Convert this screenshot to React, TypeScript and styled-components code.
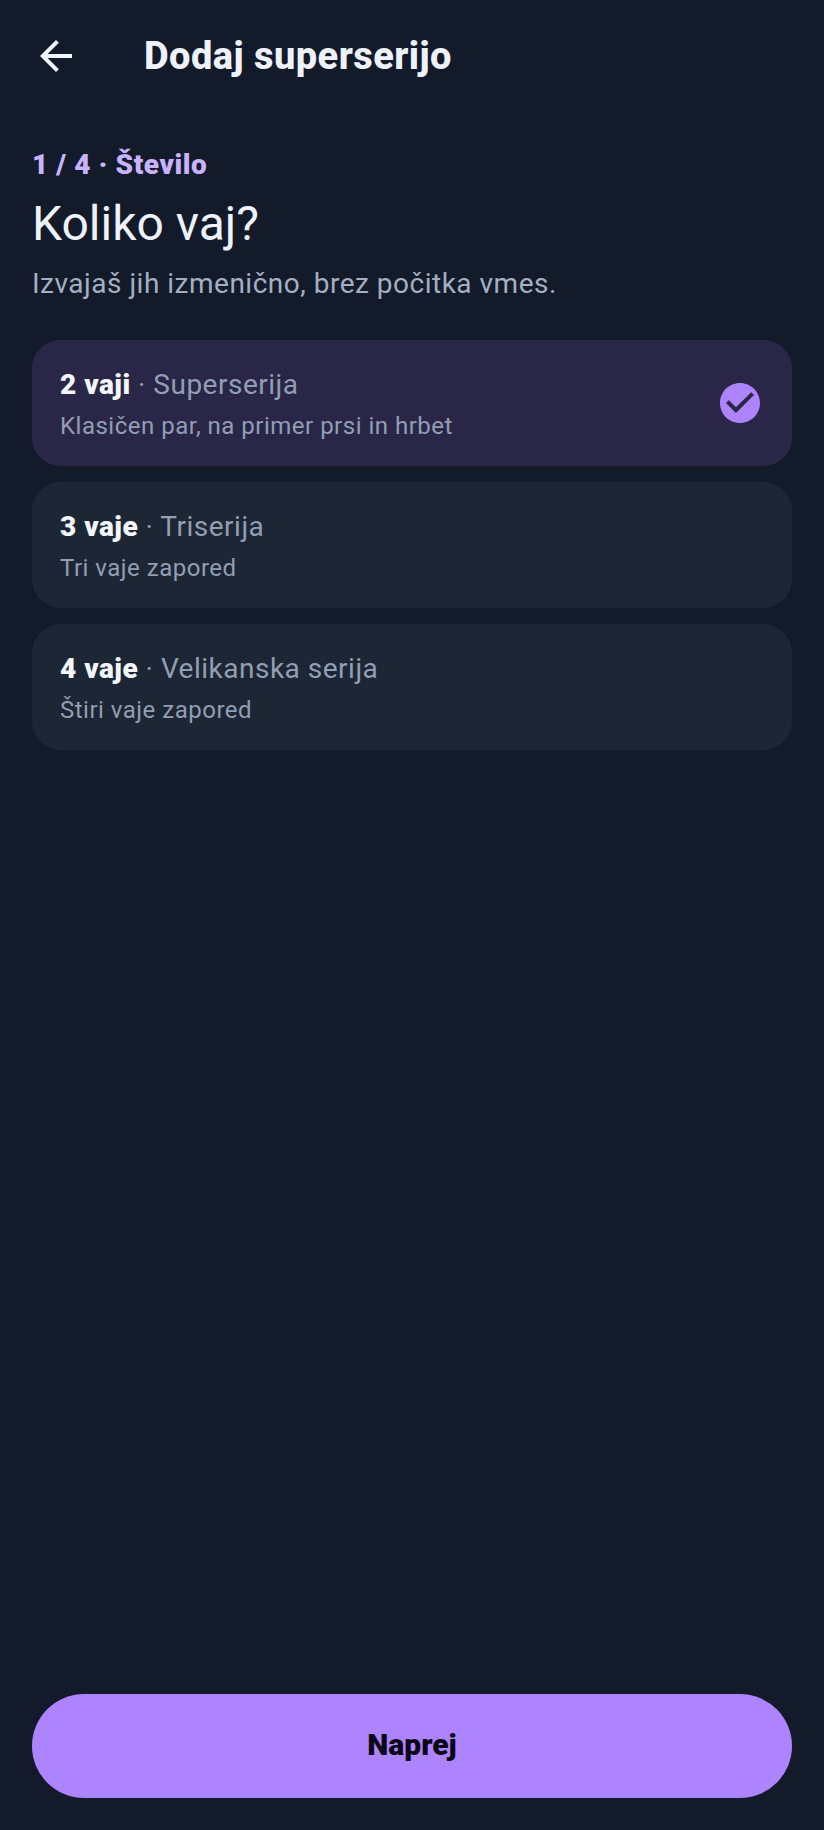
import React, { useState } from "react";
import styled, { createGlobalStyle } from "styled-components";

const GlobalStyle = createGlobalStyle`
  html, body {
    margin: 0;
    padding: 0;
    background: #131a29;
    font-family: Roboto, "Noto Sans", sans-serif;
  }
`;

const Screen = styled.div`
  width: 824px;
  height: 1830px;
  background: #131a29;
  display: flex;
  flex-direction: column;
  overflow: hidden;
`;

const TopBar = styled.header`
  height: 112px;
  display: flex;
  align-items: center;
  padding: 0 32px;
`;

const BackButton = styled.button`
  width: 48px;
  height: 48px;
  padding: 0;
  border: none;
  background: none;
  color: #f1f5fe;
  cursor: pointer;
  display: flex;
`;

const BarTitle = styled.h1`
  margin: 0 0 0 64px;
  font-size: 38px;
  font-weight: 800;
  line-height: 48px;
  letter-spacing: 0.45px;
  color: #eef2fd;
`;

const Body = styled.main`
  flex: 1;
  padding: 35px 32px 0;
  display: flex;
  flex-direction: column;
`;

const StepLabel = styled.div`
  font-size: 28px;
  font-weight: 900;
  line-height: 36px;
  letter-spacing: 0.55px;
  color: #c9b2ff;
`;

const Question = styled.h2`
  margin: 9px 0 0;
  font-size: 48px;
  font-weight: 400;
  line-height: 64px;
  color: #eef2fd;
`;

const Hint = styled.p`
  margin: 8px 0 0;
  font-size: 28px;
  line-height: 40px;
  letter-spacing: 0.5px;
  color: #a3afc2;
`;

const OptionList = styled.div`
  margin-top: 36px;
  display: flex;
  flex-direction: column;
  gap: 16px;
`;

const OptionCard = styled.div<{ $selected: boolean }>`
  height: 126px;
  box-sizing: border-box;
  padding: 0 28px;
  border-radius: 28px;
  background: ${(p) => (p.$selected ? "#2a2647" : "#1c2635")};
  display: flex;
  align-items: center;
  justify-content: space-between;
  cursor: pointer;
`;

const OptionText = styled.div`
  padding-top: 1px;
  display: flex;
  flex-direction: column;
  gap: 5px;
`;

const OptionTitle = styled.div`
  font-size: 28px;
  line-height: 40px;
  letter-spacing: 0.5px;
  color: #929eb3;
`;

const OptionCount = styled.span`
  font-weight: 900;
  color: #f4f6fe;
`;

const OptionNote = styled.div`
  font-size: 24px;
  line-height: 32px;
  letter-spacing: 0.5px;
  color: #929eb3;
`;

const Footer = styled.footer`
  padding: 0 32px 32px;
`;

const NextButton = styled.button`
  width: 100%;
  height: 104px;
  border: none;
  border-radius: 52px;
  background: #ad83ff;
  color: #0b0616;
  font-family: inherit;
  font-size: 30px;
  font-weight: 900;
  line-height: 36px;
  padding: 0 0 2px;
  cursor: pointer;
`;

const options = [
  { id: 2, count: "2 vaji", name: "Superserija", note: "Klasičen par, na primer prsi in hrbet" },
  { id: 3, count: "3 vaje", name: "Triserija", note: "Tri vaje zapored" },
  { id: 4, count: "4 vaje", name: "Velikanska serija", note: "Štiri vaje zapored" },
];

const App = () => {
  const [selected, setSelected] = useState(2);

  return (
    <Screen>
      <GlobalStyle />
      <TopBar>
        <BackButton aria-label="Nazaj">
          <svg width="48" height="48" viewBox="0 0 24 24" fill="currentColor">
            <path d="M20 11H7.83l5.59-5.59L12 4l-8 8 8 8 1.41-1.41L7.83 13H20v-2z" />
          </svg>
        </BackButton>
        <BarTitle>Dodaj superserijo</BarTitle>
      </TopBar>
      <Body>
        <StepLabel>1 / 4 · Število</StepLabel>
        <Question>Koliko vaj?</Question>
        <Hint>Izvajaš jih izmenično, brez počitka vmes.</Hint>
        <OptionList>
          {options.map((o) => (
            <OptionCard key={o.id} $selected={selected === o.id} onClick={() => setSelected(o.id)}>
              <OptionText>
                <OptionTitle>
                  <OptionCount>{o.count}</OptionCount> · {o.name}
                </OptionTitle>
                <OptionNote>{o.note}</OptionNote>
              </OptionText>
              {selected === o.id && (
                <svg width="48" height="48" viewBox="0 0 24 24" fill="#ad83ff">
                  <path d="M12 2C6.48 2 2 6.48 2 12s4.48 10 10 10 10-4.48 10-10S17.52 2 12 2zm-2 15l-5-5 1.41-1.41L10 14.17l7.59-7.59L19 8l-9 9z" />
                </svg>
              )}
            </OptionCard>
          ))}
        </OptionList>
      </Body>
      <Footer>
        <NextButton>Naprej</NextButton>
      </Footer>
    </Screen>
  );
};

export default App;
